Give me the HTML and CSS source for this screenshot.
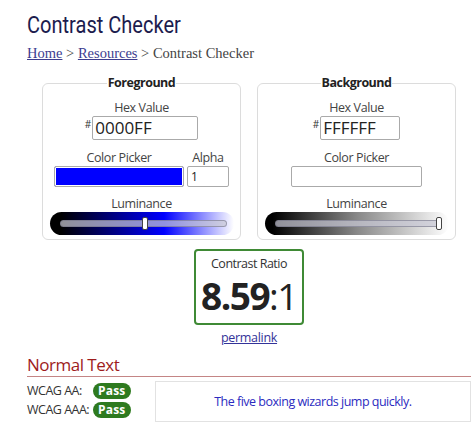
FILE: index.html
```html
<!DOCTYPE html>
<html>
<head>
<meta charset="utf-8">
<link rel="stylesheet" href="styles.css">
</head>
<body>
<div class="page">
  <h1 class="title">Contrast Checker</h1>
  <div class="crumbs"><a href="#">Home</a> &gt; <a href="#">Resources</a> &gt; Contrast Checker</div>

  <div class="panels">
    <fieldset class="panel">
      <legend>Foreground</legend>
      <div class="label">Hex Value</div>
      <div class="hexrow"><span class="hash">#</span><div class="hexbox fg-hex">0000FF</div></div>
      <div class="pickrow">
        <div class="pickcol">
          <div class="label">Color Picker</div>
          <div class="swatch fg-swatch"></div>
        </div>
        <div class="pickcol">
          <div class="label">Alpha</div>
          <div class="alphabox">1</div>
        </div>
      </div>
      <div class="label lum-label">Luminance</div>
      <div class="lum fg-lum">
        <div class="track"></div>
        <div class="thumb" style="left: 92px"></div>
      </div>
    </fieldset>
    <fieldset class="panel">
      <legend>Background</legend>
      <div class="label">Hex Value</div>
      <div class="hexrow"><span class="hash">#</span><div class="hexbox bg-hex">FFFFFF</div></div>
      <div class="pickrow">
        <div class="pickcol">
          <div class="label">Color Picker</div>
          <div class="swatch bg-swatch"></div>
        </div>
      </div>
      <div class="label lum-label">Luminance</div>
      <div class="lum bg-lum">
        <div class="track"></div>
        <div class="thumb" style="left: 171px"></div>
      </div>
    </fieldset>
  </div>

  <div class="ratio-wrap">
    <div class="ratio">
      <div class="ratio-label">Contrast Ratio</div>
      <div class="ratio-value"><b>8.59</b>:1</div>
    </div>
    <a href="#" class="permalink">permalink</a>
  </div>

  <h2 class="section">Normal Text</h2>
  <div class="results">
    <div class="wcag">
      <div class="wrow"><span class="wl">WCAG AA:</span><span class="pass">Pass</span></div>
      <div class="wrow"><span class="wl">WCAG AAA:</span><span class="pass">Pass</span></div>
    </div>
    <div class="sample">The five boxing wizards jump quickly.</div>
  </div>
</div>
</body>
</html>
```
FILE: styles.css
```css
* { box-sizing: border-box; }
html, body { margin: 0; padding: 0; background: #fff; }
body { font-family: "Open Sans", sans-serif; color: #333; overflow: hidden; }
.page { width: 444px; margin-left: 27px; padding-top: 10px; }
.title {
  font-family: Roboto, sans-serif; font-weight: 400; font-size: 24px; line-height: 30px;
  color: #1c1c4e; margin: 0; display: inline-block;
  transform: scaleX(0.835); transform-origin: left center;
}
.crumbs {
  font-family: "Liberation Serif", serif; font-size: 14.5px; color: #444; margin-top: 4px; line-height: 18px;
}
.crumbs a { color: #3d3d8f; }
.panels { display: flex; justify-content: center; gap: 16px; margin-top: 13px; }
.panel {
  width: 199px; margin: 0; border: 1px solid #dcdcdc; border-radius: 6px;
  padding: 9px 8px 4px; display: flex; flex-direction: column; align-items: center;
  min-width: 0;
}
.panel legend {
  font-weight: 700; font-size: 12.5px; letter-spacing: -0.5px; color: #222; padding: 0 1px;
  margin: 0 auto; line-height: 16px;
}
.label { font-size: 12.5px; letter-spacing: -0.4px; color: #444; line-height: 16px; text-align: center; }
.hexrow { display: flex; align-items: flex-start; }
.hash { font-size: 10px; line-height: 10px; margin-top: 3px; margin-right: 1px; color: #333; }
.hexbox {
  height: 24px; border: 1px solid #aaa; border-radius: 2px; font-size: 17px; line-height: 22px;
  padding: 0 2px; color: #222;
}
.fg-hex { width: 106px; }
.bg-hex { width: 80px; }
.pickrow { display: flex; gap: 3px; margin-top: 10px; align-items: flex-end; }
.pickcol { display: flex; flex-direction: column; align-items: center; }
.swatch { height: 21px; border: 1px solid #aaa; border-radius: 2px; }
.fg-swatch { width: 130px; background: #0000ff; box-shadow: inset 0 0 0 1px #fff; }
.bg-swatch { width: 131px; background: #fff; }
.alphabox {
  width: 42px; height: 21px; border: 1px solid #aaa; border-radius: 2px; font-size: 12px;
  line-height: 19px; padding: 0 3px; color: #222;
}
.lum-label { margin-top: 9px; }
.lum { position: relative; width: 184px; height: 23px; border-radius: 12px; }
.fg-lum { background: linear-gradient(to right, #000 0%, #000 6%, #0000ff 62%, #fff 100%); }
.bg-lum { background: linear-gradient(to right, #000 0%, #000 4%, #888 50%, #fff 100%); }
.track {
  position: absolute; left: 10px; right: 7px; top: 8px; height: 7px; border-radius: 4px;
  background: rgba(200, 200, 212, 0.72); border: 1px solid rgba(110, 110, 130, 0.55);
}
.thumb {
  position: absolute; top: 5px; width: 6px; height: 13px; background: #fff;
  border: 1px solid #444; border-radius: 2px;
}
.ratio-wrap { display: flex; flex-direction: column; align-items: center; margin-top: 9px; }
.ratio {
  width: 110px; height: 76px; border: 2px solid #3f8a35; border-radius: 4px; text-align: center;
}
.ratio-label { font-size: 12.5px; letter-spacing: -0.5px; color: #333; margin-top: 5px; line-height: 16px; }
.ratio-value { font-size: 37px; letter-spacing: -1.5px; line-height: 42px; color: #222; margin-top: 3px; }
.ratio-value b { font-weight: 700; }
.permalink { font-size: 12.5px; letter-spacing: -0.3px; color: #333399; margin-top: 5px; line-height: 16px; }
.section {
  font-weight: 400; font-size: 17px; letter-spacing: -0.5px; color: #9e1c1c; margin: 9px 0 0;
  line-height: 20px; border-bottom: 1px solid #c48585; padding-bottom: 1px;
}
.results { display: flex; align-items: flex-start; margin-top: 4px; }
.wcag { width: 128px; padding-top: 0; }
.wrow { display: flex; align-items: center; height: 19px; }
.wl { font-size: 12.5px; letter-spacing: -0.5px; width: 66px; color: #333; }
.pass {
  background: #2e7a1f; color: #fff; font-weight: 700; font-size: 12px; line-height: 16px;
  padding: 0 5px; border-radius: 9px; letter-spacing: 0.2px;
}
.sample {
  width: 317px; height: 41px; border: 1px solid #e2e2e2; display: flex; align-items: center;
  justify-content: center; color: #2b2bbf; font-size: 12.5px; letter-spacing: -0.5px;
}
```
